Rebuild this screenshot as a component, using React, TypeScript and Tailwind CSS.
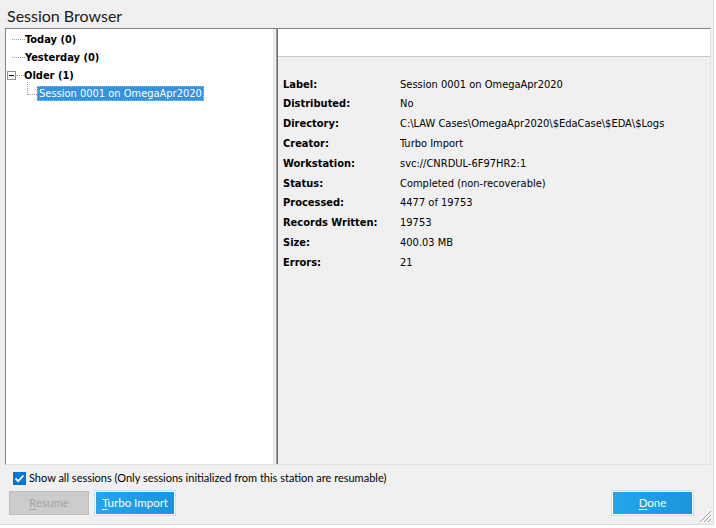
const tahoma = "font-['DejaVu_Sans_Condensed','Liberation_Sans',sans-serif]";
const segoe = "font-['Lato','Liberation_Sans',sans-serif]";

const details: [string, string][] = [
  ["Label:", "Session 0001 on OmegaApr2020"],
  ["Distributed:", "No"],
  ["Directory:", "C:\\LAW Cases\\OmegaApr2020\\$EdaCase\\$EDA\\$Logs"],
  ["Creator:", "Turbo Import"],
  ["Workstation:", "svc://CNRDUL-6F97HR2:1"],
  ["Status:", "Completed (non-recoverable)"],
  ["Processed:", "4477 of 19753"],
  ["Records Written:", "19753"],
  ["Size:", "400.03 MB"],
  ["Errors:", "21"],
];

function RootNode({ label, expanded }: { label: string; expanded?: boolean }) {
  return (
    <div className="flex items-center h-[18px]">
      {expanded ? (
        <span className="w-[9px] h-[9px] ml-[1px] border border-[#919191] bg-white flex items-center justify-center">
          <span className="w-[5px] h-px bg-black" />
        </span>
      ) : (
        <span className="w-[6px]" />
      )}
      <span className={`border-t border-dotted border-[#a0a0a0] ${expanded ? "w-[8px]" : "w-[13px]"}`} />
      <span className={`${tahoma} text-[11px] font-bold text-black leading-none`}>{label}</span>
    </div>
  );
}

export default function App() {
  return (
    <div className="w-[716px] h-[528px] bg-white">
      <div className="w-[714px] h-[525px] bg-[#f0f0f0] border-r border-b border-[#dcdcdc] flex flex-col">
        <div className={`${segoe} text-[16px] text-[#1a1a1a] h-[28px] pl-[7px] pt-[6px] leading-[20px]`}>Session Browser</div>

        <div className="ml-[5px] w-[706px] h-[437px] border-t border-l border-[#828282] border-r border-b border-r-[#e3e3e3] border-b-[#e3e3e3] flex">
          {/* tree */}
          <div className="w-[268px] bg-white border-r border-[#e3e3e3] pt-[1px]">
            <RootNode label="Today (0)" />
            <RootNode label="Yesterday (0)" />
            <RootNode label="Older (1)" expanded />
            <div className="flex items-start h-[18px]">
              <span className="ml-[21px] w-[10px] h-[13px] border-l border-b border-dotted border-[#a0a0a0] -mt-[2px]" />
              <span className={`${tahoma} text-[11px] text-white bg-[#3393df] px-[1px] h-[15px] leading-[13px] mt-[2px] border border-dotted border-[#8cc3ee]`}>
                Session 0001 on OmegaApr2020
              </span>
            </div>
          </div>
          <div className="w-[2px] bg-[#f0f0f0]" />
          {/* details */}
          <div className="flex-1 border-l border-[#a0a0a0] flex">
            <div className="flex-1 border-l border-[#696969] flex flex-col">
              <div className="h-[28px] bg-white border-b border-[#c8c8c8]" />
              <div className={`${tahoma} text-[11px] text-black flex-1 pt-[18px] pl-[5px]`}>
                {details.map(([k, v]) => (
                  <div key={k} className="flex h-[19.8px] items-center">
                    <span className="w-[117px] font-bold">{k}</span>
                    <span>{v}</span>
                  </div>
                ))}
              </div>
            </div>
          </div>
        </div>

        <div className={`${segoe} text-[11px] text-black flex items-center h-[25px] pl-[13px] pt-[1px]`}>
          <span className="w-[13px] h-[13px] bg-[#0078d7] flex items-center justify-center">
            <svg width="11" height="11" viewBox="0 0 11 11">
              <path d="M1.5 5.5 L4.2 8.2 L9.5 2.5" stroke="white" strokeWidth="1.8" fill="none" />
            </svg>
          </span>
          <span className="pl-[3px]">Show all sessions (Only sessions initialized from this station are resumable)</span>
        </div>

        <div className={`${segoe} text-[11.5px] flex items-start pl-[9px] pr-[20px] pt-[1px] relative flex-1`}>
          <button className="w-[80px] h-[24px] bg-[#cccccc] border border-[#bfbfbf] text-[#a3a3a3]">
            <span className="underline underline-offset-2">R</span>esume
          </button>
          <button className="ml-[6px] w-[80px] h-[24px] bg-gradient-to-r from-[#24a6ea] to-[#1a95dc] border border-white outline outline-1 outline-[#c5e4f5] text-white">
            <span className="underline underline-offset-2">T</span>urbo Import
          </button>
          <div className="flex-1" />
          <button className="w-[81px] h-[24px] bg-gradient-to-r from-[#24a6ea] to-[#1a95dc] border border-white outline outline-1 outline-[#c5e4f5] text-white">
            <span className="underline underline-offset-2">D</span>one
          </button>
          <svg className="absolute right-[1px] bottom-[1px]" width="14" height="14" viewBox="0 0 14 14">
            <path d="M13 2 L2 13 M13 6 L6 13 M13 10 L10 13" stroke="#a0a0a0" strokeWidth="1" />
            <path d="M14 3 L3 14 M14 7 L7 14 M14 11 L11 14" stroke="#ffffff" strokeWidth="1" />
          </svg>
        </div>
      </div>
    </div>
  );
}
